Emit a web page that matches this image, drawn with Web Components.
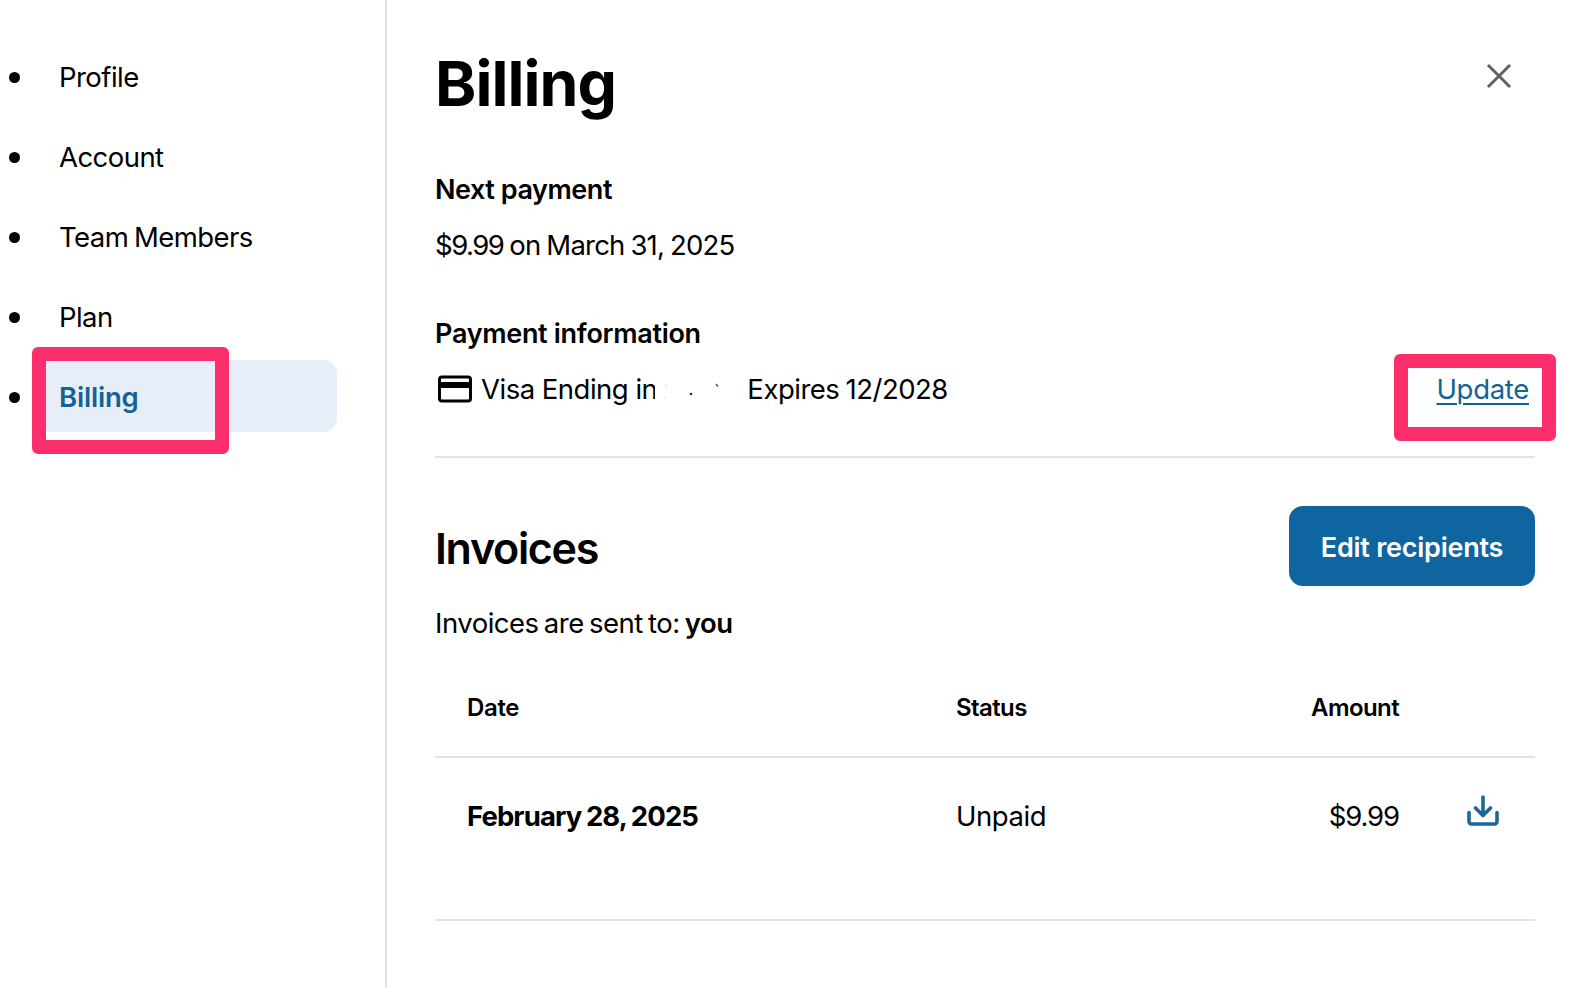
<!DOCTYPE html>
<html>
<head>
<meta charset="utf-8">
<title>Billing</title>
<style>
  html, body { margin: 0; height: 100%; background: #fff; }
  body { font-family: Inter, "Liberation Sans", sans-serif; color: #000; }
</style>
</head>
<body>
<settings-page>
  <settings-nav slot="nav">
    <nav-item>Profile</nav-item>
    <nav-item>Account</nav-item>
    <nav-item>Team Members</nav-item>
    <nav-item>Plan</nav-item>
    <nav-item active marked>Billing</nav-item>
  </settings-nav>
  <billing-panel></billing-panel>
</settings-page>

<script>
class SettingsPage extends HTMLElement {
  constructor() {
    super();
    this.attachShadow({ mode: 'open' });
    this.shadowRoot.innerHTML = `
      <style>
        :host { display: flex; height: 988px; overflow: hidden; }
        .side { flex: 0 0 385px; border-right: 2px solid #e3e3e3; box-sizing: content-box; }
        .main { flex: 1; min-width: 0; }
      </style>
      <div class="side"><slot name="nav"></slot></div>
      <div class="main"><slot></slot></div>
    `;
  }
}

class SettingsNav extends HTMLElement {
  constructor() {
    super();
    this.attachShadow({ mode: 'open' });
    this.shadowRoot.innerHTML = `
      <style>
        :host { display: flex; flex-direction: column; gap: 8px; padding: 40px 48px 0 9px; }
      </style>
      <slot></slot>
    `;
  }
}

class NavItem extends HTMLElement {
  constructor() {
    super();
    this.attachShadow({ mode: 'open' });
    this.shadowRoot.innerHTML = `
      <style>
        :host { display: flex; align-items: center; height: 72px; font-size: 27.5px; letter-spacing: -0.55px; word-spacing: -1.5px; position: relative; }
        .dot { flex: none; width: 11px; height: 11px; border-radius: 50%; background: #000; margin: 3px 19px 0 0; }
        .link { flex: 1; display: flex; align-items: center; height: 100%; box-sizing: border-box; padding: 2px 0 0 20px; border-radius: 14px; }
        :host([active]) .link { background: #e8eef7; color: #136397; font-weight: 600; letter-spacing: -0.2px; }
        .mark { display: none; position: absolute; left: 23px; top: -13px; width: 197px; height: 107px; box-sizing: border-box;
                border: 14px solid #fd2e6c; border-radius: 6px; }
        :host([marked]) .mark { display: block; }
      </style>
      <span class="dot"></span>
      <span class="link"><slot></slot></span>
      <span class="mark"></span>
    `;
  }
}

class BillingPanel extends HTMLElement {
  constructor() {
    super();
    this.attachShadow({ mode: 'open' });
    this.shadowRoot.innerHTML = `
      <style>
        :host { display: block; padding: 0 35px 0 48px; font-size: 27.5px; letter-spacing: -0.5px; }
        h1, h2, h3, p { margin: 0; }
        .top { display: flex; justify-content: space-between; align-items: center; height: 168px; }
        h1 { font-size: 62.5px; font-weight: 700; letter-spacing: -0.9px; padding-bottom: 2px; }
        .close { display: block; margin-right: 23px; margin-top: -16px; }
        h3 { font-size: 27px; font-weight: 600; height: 44px; line-height: 44px; letter-spacing: -0.45px; }
        .line { display: flex; align-items: center; height: 44px; margin-top: 11px; }
        .next { letter-spacing: -0.8px; word-spacing: -1px; display: block; line-height: 44px; }
        .price { letter-spacing: -1.5px; }
        .card { margin: 0 9px 0 3px; display: block; }
        .redacted { position: relative; width: 90px; align-self: stretch; flex: none; }
        .redacted svg { position: absolute; left: -2px; top: 0; overflow: visible; display: block; }
        .expires { word-spacing: -1px; }
        .update { margin-left: auto; margin-right: 6px; color: #136397; letter-spacing: -0.3px; text-decoration: underline; text-underline-offset: 4px; text-decoration-thickness: 2px; position: relative; }
        .update::after { content: ""; position: absolute; left: -42px; top: -18px; width: 162px; height: 87px; box-sizing: border-box; border: 14px solid #fd2e6c; border-radius: 6px; }
        .sec2 { margin-top: 45px; letter-spacing: -0.3px; }
        hr { border: 0; border-top: 2px solid #e3e3e3; margin: 0; }
        .rule1 { margin-top: 45px; }
        .head { display: flex; justify-content: space-between; align-items: center; height: 80px; margin-top: 48px; }
        h2 { font-size: 43px; font-weight: 600; letter-spacing: -1.3px; padding-top: 4px; }
        .btn { font: inherit; font-weight: 600; font-size: 27px; letter-spacing: -0.25px; color: #fff; background: #0f659f; border: 0; border-radius: 14px; width: 246px; height: 80px; padding: 2px 0 0; }
        .sent { height: 44px; line-height: 44px; margin-top: 15px; word-spacing: -2px; }
        .sent b { font-weight: 600; }
      </style>
      <div class="top">
        <h1>Billing</h1>
        <svg class="close" width="26" height="26" viewBox="0 0 26 26" fill="none" stroke="#616161" stroke-width="3"><path d="M2 2 24 24M24 2 2 24"/></svg>
      </div>
      <h3>Next payment</h3>
      <div class="line next"><span class="price">$9.99</span> on March 31, 2025</div>
      <h3 class="sec2">Payment information</h3>
      <div class="line">
        <svg class="card" width="34" height="28" viewBox="0 0 34 28" fill="none">
          <rect x="1.500" y="2" width="31" height="24" rx="2.500" stroke="#000" stroke-width="3"/>
          <rect x="2" y="7" width="30" height="6" fill="#000"/>
        </svg>
        <span>Visa Ending in</span>
        <span class="redacted">
          <svg width="90" height="44" viewBox="0 0 90 44">
            <rect x="0" y="6" width="5" height="32" fill="#fff"/>
            <circle cx="36" cy="27" r="1.300" fill="#333"/>
            <path d="M61 17l2 2.500" stroke="#555" stroke-width="1.500"/>
            <path d="M10 18l2 1M10 30l1 1" stroke="#ddd" stroke-width="1.500"/>
          </svg>
        </span>
        <span class="expires">Expires 12/2028</span>
        <span class="update">Update</span>
      </div>
      <hr class="rule1">
      <div class="head">
        <h2>Invoices</h2>
        <button class="btn">Edit recipients</button>
      </div>
      <p class="sent">Invoices are sent to: <b>you</b></p>
      <invoice-table></invoice-table>
    `;
  }
}

class InvoiceTable extends HTMLElement {
  constructor() {
    super();
    this.attachShadow({ mode: 'open' });
    this.shadowRoot.innerHTML = `
      <style>
        :host { display: block; margin-top: 23px; letter-spacing: -0.45px; }
        .row { display: grid; grid-template-columns: 489px 180px 263px 1fr; align-items: center; padding-left: 32px; border-bottom: 2px solid #e3e3e3; }
        .hd { height: 78px; padding-bottom: 10px; font-size: 24px; font-weight: 600; letter-spacing: -0.35px; }
        .hd .st { letter-spacing: -0.6px; }
        .hd .amt { letter-spacing: -0.6px; }
        .bd { height: 161px; }
        .amt { text-align: right; }
        .date { font-weight: 700; letter-spacing: -0.9px; word-spacing: -1px; }
        .bd .amt { letter-spacing: -1.1px; }
        .dl { display: block; margin: -10px 0 0 68px; }
        .bd > * { position: relative; top: -23px; }
      </style>
      <div class="row hd"><span>Date</span><span class="st">Status</span><span class="amt">Amount</span><span></span></div>
      <div class="row bd">
        <span class="date">February 28, 2025</span>
        <span>Unpaid</span>
        <span class="amt">$9.99</span>
        <svg class="dl" width="32" height="32" viewBox="0 0 32 32" fill="none" stroke="#1a6899" stroke-width="3.600" stroke-linecap="round" stroke-linejoin="round">
          <path d="M16 2V20M8.500 13 16 20.500 23.500 13"/>
          <path d="M2 17.500V26.500A2.500 2.500 0 0 0 4.500 29H27.500A2.500 2.500 0 0 0 30 26.500V17.500"/>
        </svg>
      </div>
    `;
  }
}

customElements.define('settings-page', SettingsPage);
customElements.define('settings-nav', SettingsNav);
customElements.define('nav-item', NavItem);
customElements.define('billing-panel', BillingPanel);
customElements.define('invoice-table', InvoiceTable);
</script>
</body>
</html>
